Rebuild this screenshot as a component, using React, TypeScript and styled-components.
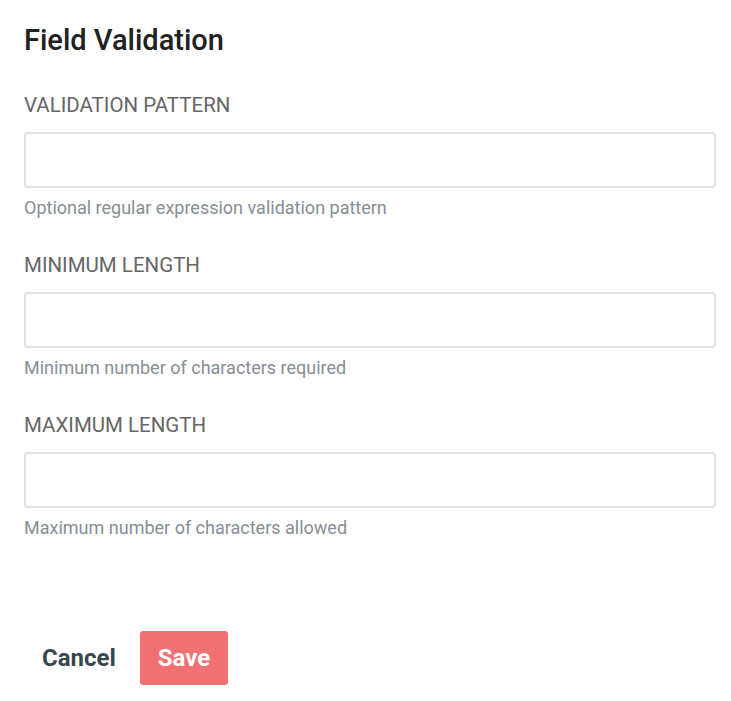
import styled, { createGlobalStyle } from "styled-components";

const GlobalStyle = createGlobalStyle`
  body {
    margin: 0;
    background: #ffffff;
    font-family: Roboto, "Liberation Sans", sans-serif;
  }
`;

const Panel = styled.div`
  width: 731px;
  padding: 22px 15px 0 24px;
  box-sizing: border-box;
`;

const Title = styled.h2`
  margin: 0 0 35px;
  font-size: 29px;
  font-weight: 500;
  line-height: 36px;
  color: #212121;
`;

const Field = styled.div`
  display: flex;
  flex-direction: column;
  margin-bottom: 35px;
`;

const Label = styled.label`
  font-size: 20.5px;
  line-height: 24px;
  color: #666666;
  margin-bottom: 15px;
`;

const Input = styled.input`
  height: 56px;
  box-sizing: border-box;
  border: 2px solid #e0e3e5;
  border-radius: 3px;
  padding: 0 14px;
  font-size: 18px;
  outline: none;
`;

const Hint = styled.span`
  margin-top: 10px;
  font-size: 18px;
  line-height: 20px;
  color: #868e96;
`;

const Actions = styled.div`
  display: flex;
  align-items: center;
  gap: 24px;
  margin-top: 93px;
  padding-left: 18px;
`;

const TextButton = styled.button`
  border: none;
  background: none;
  padding: 0;
  font-family: inherit;
  font-size: 24px;
  font-weight: 700;
  color: #37474f;
`;

const PrimaryButton = styled.button`
  border: none;
  background: #ef7171;
  color: #ffffff;
  border-radius: 3px;
  height: 54px;
  padding: 0 18px;
  font-family: inherit;
  font-size: 24px;
  font-weight: 700;
`;

const fields = [
  { label: "VALIDATION PATTERN", hint: "Optional regular expression validation pattern" },
  { label: "MINIMUM LENGTH", hint: "Minimum number of characters required" },
  { label: "MAXIMUM LENGTH", hint: "Maximum number of characters allowed" },
];

export default function App() {
  return (
    <>
      <GlobalStyle />
      <Panel>
        <Title>Field Validation</Title>
        {fields.map((f) => (
          <Field key={f.label}>
            <Label>{f.label}</Label>
            <Input />
            <Hint>{f.hint}</Hint>
          </Field>
        ))}
        <Actions>
          <TextButton>Cancel</TextButton>
          <PrimaryButton>Save</PrimaryButton>
        </Actions>
      </Panel>
    </>
  );
}
